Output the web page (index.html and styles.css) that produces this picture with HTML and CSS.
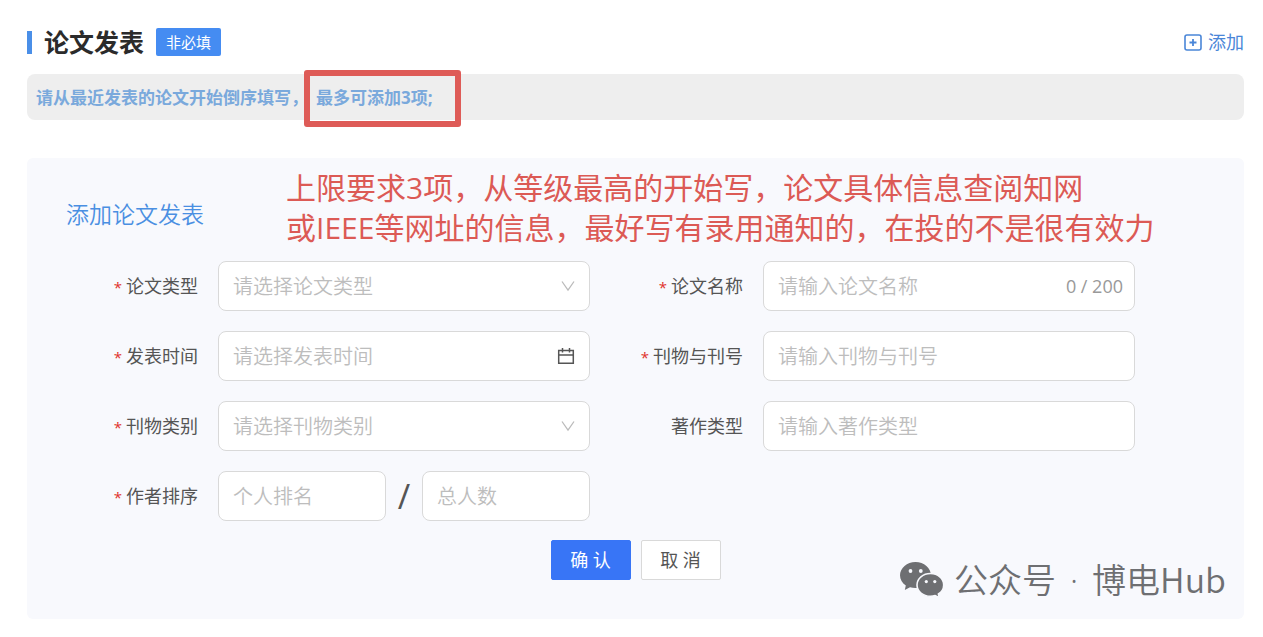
FILE: index.html
```html
<!DOCTYPE html>
<html lang="zh-CN">
<head>
    <meta charset="UTF-8">
    <meta name="viewport" content="width=device-width, initial-scale=1.0">
    <title>论文发表</title>
    <link rel="stylesheet" href="styles.css">
</head>
<body>
    <section class="page">
        <!-- 标题栏 -->
        <header class="header">
            <h1>论文发表</h1>
            <span class="badge">非必填</span>
            <button type="button" class="add-btn">
                <svg width="18" height="18" viewBox="0 0 18 18" fill="none" stroke="currentColor">
                    <rect x="1" y="2" width="16" height="15" rx="2" stroke-width="1.6"/>
                    <path d="M9 6v7M5.500 9.500h7" stroke-width="1.8"/>
                </svg>
                添加
            </button>
        </header>

        <!-- 填写提示 -->
        <p class="tip"><span>请从最近发表的论文开始倒序填写，</span><span class="tip-mark">最多可添加3项;</span></p>

        <form class="panel">
            <h2>添加论文发表</h2>
            <p class="note">上限要求3项，从等级最高的开始写，论文具体信息查阅知网<br>或IEEE等网址的信息，最好写有录用通知的，在投的不是很有效力</p>

            <div class="fields">
                <div class="field">
                    <label class="required" for="paperType">论文类型</label>
                    <div class="control">
                        <select id="paperType">
                            <option>请选择论文类型</option>
                        </select>
                        <svg class="arrow" width="14" height="12" viewBox="0 0 14 12"><path d="M1 1.5l6 8.5 6-8.5"/></svg>
                    </div>
                </div>
                <div class="field">
                    <label class="required" for="paperName">论文名称</label>
                    <div class="control">
                        <input type="text" id="paperName" maxlength="200" placeholder="请输入论文名称">
                        <span class="count">0 / 200</span>
                    </div>
                </div>
                <div class="field">
                    <label class="required" for="pubTime">发表时间</label>
                    <div class="control">
                        <input type="text" id="pubTime" placeholder="请选择发表时间">
                        <svg class="calendar" width="18" height="18" viewBox="0 0 18 18"><path d="M1.7 3.5h14.6v12.8H1.7zM1.7 8h14.6M5.5 1v4.5M12.5 1v4.5"/></svg>
                    </div>
                </div>
                <div class="field">
                    <label class="required" for="journal">刊物与刊号</label>
                    <div class="control">
                        <input type="text" id="journal" placeholder="请输入刊物与刊号">
                    </div>
                </div>
                <div class="field">
                    <label class="required" for="journalType">刊物类别</label>
                    <div class="control">
                        <select id="journalType">
                            <option>请选择刊物类别</option>
                        </select>
                        <svg class="arrow" width="14" height="12" viewBox="0 0 14 12"><path d="M1 1.5l6 8.5 6-8.5"/></svg>
                    </div>
                </div>
                <div class="field">
                    <label for="workType">著作类型</label>
                    <div class="control">
                        <input type="text" id="workType" placeholder="请输入著作类型">
                    </div>
                </div>
                <div class="field">
                    <label class="required" for="rank">作者排序</label>
                    <div class="control">
                        <input type="text" id="rank" placeholder="个人排名">
                        <span class="slash">/</span>
                        <input type="text" id="total" placeholder="总人数" aria-label="总人数">
                    </div>
                </div>
            </div>

            <div class="actions">
                <button type="button" class="btn primary">确 认</button>
                <button type="button" class="btn">取 消</button>
            </div>

            <!-- 公众号水印 -->
            <div class="watermark">
                <svg width="44" height="36" viewBox="0 0 44 36">
                    <path fill="#6e6f72" d="M15.500 0C7 0 0 6 0 13.300c0 4.200 2.200 7.700 5.800 10.200L4.800 28l5.200-2.700c1.800.5 3.600.8 5.500.8C24 26.100 31 20.600 31 13.300S24 0 15.500 0z"/>
                    <path fill="#6e6f72" stroke="#f8f9fd" stroke-width="1.600" d="M30.500 11.500c-7.500 0-13.500 5-13.500 11.400s6 11.400 13.500 11.400c1.700 0 3.200-.2 4.700-.7l4.200 2.100-1-3.700c3.300-2.100 5.300-5.300 5.300-9.100 0-6.400-5.800-11.400-13.200-11.400z"/>
                    <g fill="#f8f9fd">
                        <circle cx="10.500" cy="9" r="1.900"/>
                        <circle cx="20.800" cy="9" r="1.900"/>
                        <circle cx="26.300" cy="19.600" r="1.600"/>
                        <circle cx="34.800" cy="19.600" r="1.600"/>
                    </g>
                </svg>
                <p>公众号<span class="dot">·</span>博电Hub</p>
            </div>
        </form>
    </section>
</body>
</html>
```
FILE: styles.css
```css
* {
    box-sizing: border-box;
}

body {
    margin: 0;
    background: #fff;
    font-family: "Open Sans", "Noto Sans CJK SC", sans-serif;
    color: #555;
}

h1, h2, p {
    margin: 0;
}

input, select, button {
    font-family: inherit;
}

.page {
    padding: 28px 19px 18px 27px;
}

/* 标题栏 */
.header {
    display: flex;
    align-items: center;
    height: 28px;
}

h1 {
    display: flex;
    align-items: center;
    gap: 12px;
    font-size: 25px;
    line-height: 28px;
    color: #2b2b2b;
}

h1::before {
    content: "";
    width: 5px;
    height: 23px;
    background: #4a8fe8;
}

.badge {
    margin-left: 12px;
    padding: 0 10px;
    border-radius: 2px;
    background: #458cf2;
    color: #fff;
    font-size: 15px;
    line-height: 28px;
}

.add-btn {
    display: flex;
    align-items: center;
    gap: 6px;
    margin-left: auto;
    padding: 0;
    border: none;
    background: none;
    color: #4a86d8;
    font-size: 18px;
    line-height: 28px;
    cursor: pointer;
}

/* 提示条 */
.tip {
    display: flex;
    gap: 8px;
    margin-top: 18px;
    padding: 1px 9px 0;
    border-radius: 8px;
    background: #eee;
    color: #7aa9dc;
    font-size: 17px;
    font-weight: bold;
    line-height: 45px;
}

.tip-mark {
    position: relative;
}

.tip-mark::after {
    content: "";
    position: absolute;
    inset: -5px -28px -7px -12px;
    border: 6px solid #de5b57;
    border-radius: 3px;
}

/* 表单 */
.panel {
    position: relative;
    margin-top: 38px;
    padding: 40px 109px 39px 18px;
    border-radius: 6px;
    background: #f8f9fd;
}

h2 {
    margin: 0 0 31px 21px;
    color: #4a8fe2;
    font-size: 23px;
    font-weight: 350;
    line-height: 32px;
}

.note {
    position: absolute;
    top: 10px;
    left: 259px;
    color: #dc5a55;
    font-size: 30px;
    line-height: 40px;
    white-space: nowrap;
}

.fields {
    display: grid;
    grid-template-columns: 1fr 1fr;
    gap: 20px 0;
}

.field {
    display: flex;
    align-items: center;
    gap: 20px;
}

label {
    width: 153px;
    padding-bottom: 2px;
    color: #555;
    font-size: 18px;
    text-align: right;
    white-space: nowrap;
}

.required::before {
    content: "*";
    margin-right: 4px;
    color: #e0322d;
    font-size: 15px;
}

.control {
    position: relative;
    display: flex;
    flex: 1;
    align-items: center;
}

input, select {
    flex: 1;
    width: 100%;
    min-width: 0;
    height: 50px;
    padding: 1px 14px 0;
    border: 1px solid #d9d9d9;
    border-radius: 8px;
    outline: none;
    background: #fff;
    color: #bdbdbd;
    font-size: 20px;
    font-weight: 350;
    appearance: none;
}

input::placeholder {
    color: #bdbdbd;
}

input:focus, select:focus {
    border-color: #3875f6;
}

.arrow, .calendar, .count {
    position: absolute;
    right: 15px;
    pointer-events: none;
}

.arrow, .calendar {
    fill: none;
    stroke: #bbb;
    stroke-width: 1.3;
}

.calendar {
    stroke: #555;
    stroke-width: 1.5;
}

.count {
    right: 12px;
    color: #999;
    font-size: 18px;
}

.slash {
    width: 36px;
    font-size: 34px;
    line-height: 50px;
    text-align: center;
}

.actions {
    display: flex;
    justify-content: center;
    gap: 10px;
    margin: 19px -109px 0 -18px;
}

.btn {
    width: 80px;
    height: 40px;
    padding: 0 0 2px;
    border: 1px solid #d9d9d9;
    border-radius: 2px;
    background: #fff;
    color: #555;
    font-size: 18px;
    cursor: pointer;
}

.primary {
    border-color: #3875f6;
    background: #3875f6;
    color: #fff;
}

/* 水印 */
.watermark {
    position: absolute;
    right: 18px;
    bottom: 19px;
    display: flex;
    align-items: center;
    gap: 10px;
    color: #6e6f72;
    font-family: "Noto Sans CJK SC", sans-serif;
    font-size: 34px;
    font-weight: 350;
    line-height: 40px;
    white-space: nowrap;
}

.dot {
    display: inline-block;
    width: 36px;
    font-family: "Open Sans", sans-serif;
    text-align: center;
}
```
